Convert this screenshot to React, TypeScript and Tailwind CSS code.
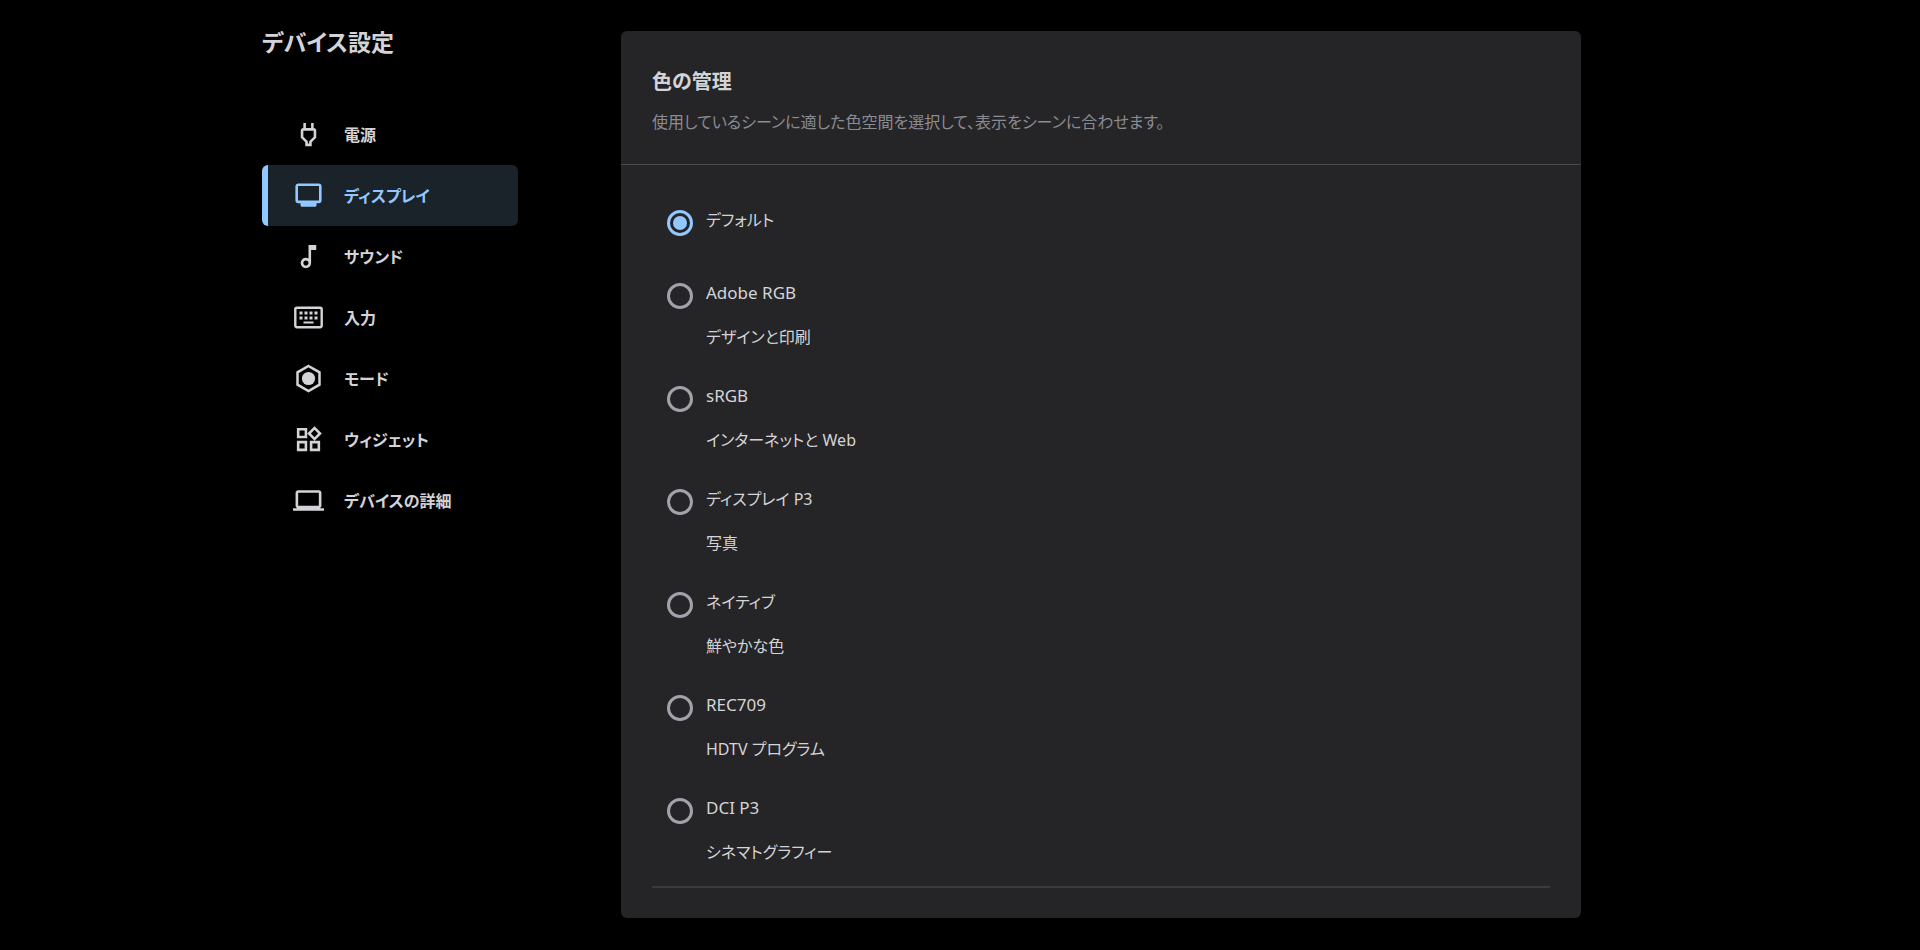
import React, { useState } from 'react';
import { MdOutlinePower, MdOutlineMusicNote, MdOutlineWidgets, MdLaptop } from 'react-icons/md';

interface IconProps {
    className?: string;
}

const MonitorIcon = ({ className }: IconProps) => (
    <svg viewBox="0 0 31 31" className={className} fill="none" aria-hidden="true">
        <rect x="3.7" y="4.7" width="23.6" height="17.2" rx="1.6" stroke="currentColor" strokeWidth="2.6" />
        <path d="M7.5 22h16v3.200c0 .9-.6 1.500-1.500 1.500h-13c-.9 0-1.500-.6-1.500-1.500z" fill="currentColor" />
    </svg>
);

const KeyboardIcon = ({ className }: IconProps) => (
    <svg viewBox="0 0 31 31" className={className} fill="none" aria-hidden="true">
        <rect x="2.300" y="5.800" width="26.400" height="19.400" rx="1.600" stroke="currentColor" strokeWidth="2.400" />
        <path
            d="M6.500 9.500h3v3h-3zM11.500 9.500h3v3h-3zM16.500 9.500h3v3h-3zM21.500 9.500h3v3h-3zM6.500 14.500h3v3h-3zM11.500 14.500h3v3h-3zM16.500 14.500h3v3h-3zM21.500 14.500h3v3h-3zM10.500 19.500h10v2h-10z"
            fill="currentColor"
        />
    </svg>
);

const ModeIcon = ({ className }: IconProps) => (
    <svg viewBox="0 0 31 31" className={className} fill="none" aria-hidden="true">
        <path d="M15.5 3l11 6.3v12.4l-11 6.3-11-6.3V9.3z" stroke="currentColor" strokeWidth="2.5" />
        <circle cx="15.5" cy="15.5" r="6.6" fill="currentColor" />
    </svg>
);

const NAV_ITEMS: { id: string; label: string; icon: React.ComponentType<IconProps> }[] = [
    { id: 'power', label: '電源', icon: MdOutlinePower },
    { id: 'display', label: 'ディスプレイ', icon: MonitorIcon },
    { id: 'sound', label: 'サウンド', icon: MdOutlineMusicNote },
    { id: 'input', label: '入力', icon: KeyboardIcon },
    { id: 'mode', label: 'モード', icon: ModeIcon },
    { id: 'widget', label: 'ウィジェット', icon: MdOutlineWidgets },
    { id: 'details', label: 'デバイスの詳細', icon: MdLaptop },
];

const COLOR_SPACES: { id: string; label: string; note?: string; latin?: boolean }[] = [
    { id: 'default', label: 'デフォルト' },
    { id: 'adobe-rgb', label: 'Adobe RGB', note: 'デザインと印刷', latin: true },
    { id: 'srgb', label: 'sRGB', note: 'インターネットと Web', latin: true },
    { id: 'display-p3', label: 'ディスプレイ P3', note: '写真' },
    { id: 'native', label: 'ネイティブ', note: '鮮やかな色' },
    { id: 'rec709', label: 'REC709', note: 'HDTV プログラム', latin: true },
    { id: 'dci-p3', label: 'DCI P3', note: 'シネマトグラフィー', latin: true },
];

const Sidebar = ({ active, onSelect }: { active: string; onSelect: (id: string) => void }) => (
    <aside className="w-64 shrink-0">
        <h1 className="text-[23px] leading-9 font-bold">デバイス設定</h1>
        <nav className="mt-11 flex flex-col">
            {NAV_ITEMS.map(({ id, label, icon: Icon }) => (
                <button
                    key={id}
                    type="button"
                    onClick={() => onSelect(id)}
                    aria-current={active === id ? 'page' : undefined}
                    className={`flex h-[61px] items-center gap-5 rounded-md border-l-[6px] pl-[25px] text-left text-base font-bold ${
                        active === id
                            ? 'border-[#92c7ff] bg-[#1a222a] text-[#92c7ff]'
                            : 'border-transparent hover:bg-[#16191d]'
                    }`}
                >
                    <Icon className="size-[31px] shrink-0" />
                    <span>{label}</span>
                </button>
            ))}
        </nav>
    </aside>
);

export default function App() {
    const [active, setActive] = useState('display');
    const [colorSpace, setColorSpace] = useState('default');

    return (
        <div
            lang="ja"
            className="min-h-screen bg-black font-['Noto_Sans','Noto_Sans_CJK_JP',sans-serif] text-[#d4d4d8] [font-feature-settings:'palt']"
        >
            <div className="mx-auto flex max-w-[1396px] items-start gap-[103px] pt-6 pb-8">
                <Sidebar active={active} onSelect={setActive} />

                <main className="mt-[7px] max-w-[960px] flex-1 rounded-md bg-[#252527]">
                    <header className="border-b border-[#4a4a4e] px-[31px] pt-[33px] pb-[26px]">
                        <h2 id="color-heading" className="text-[20px] leading-9 font-bold">色の管理</h2>
                        <p className="mt-1.5 text-base leading-8 text-[#8b8b93]">
                            使用しているシーンに適した色空間を選択して、表示をシーンに合わせます。
                        </p>
                    </header>

                    <div className="px-[31px] pt-[39px] pb-[30px]">
                        <fieldset
                            aria-labelledby="color-heading"
                            className="flex flex-col gap-[27px] border-b-2 border-[#3a3a3d] pb-[18px] pl-[15px]"
                        >
                            {COLOR_SPACES.map(({ id, label, note, latin }) => (
                                <label key={id} className="flex min-h-[46px] cursor-pointer items-start gap-[13px] text-base leading-8">
                                    <input
                                        type="radio"
                                        name="color-space"
                                        value={id}
                                        checked={colorSpace === id}
                                        onChange={() => setColorSpace(id)}
                                        className="mt-1.5 grid size-[26px] shrink-0 appearance-none place-items-center rounded-full border-[3px] border-[#a3a2ab] before:size-3.5 before:rounded-full checked:border-[#92c7ff] checked:before:bg-[#92c7ff]"
                                    />
                                    <span className="flex flex-col gap-3">
                                        <span className={latin ? 'text-[17px] leading-8' : ''}>{label}</span>
                                        {note ? <span>{note}</span> : null}
                                    </span>
                                </label>
                            ))}
                        </fieldset>
                    </div>
                </main>
            </div>
        </div>
    );
}
